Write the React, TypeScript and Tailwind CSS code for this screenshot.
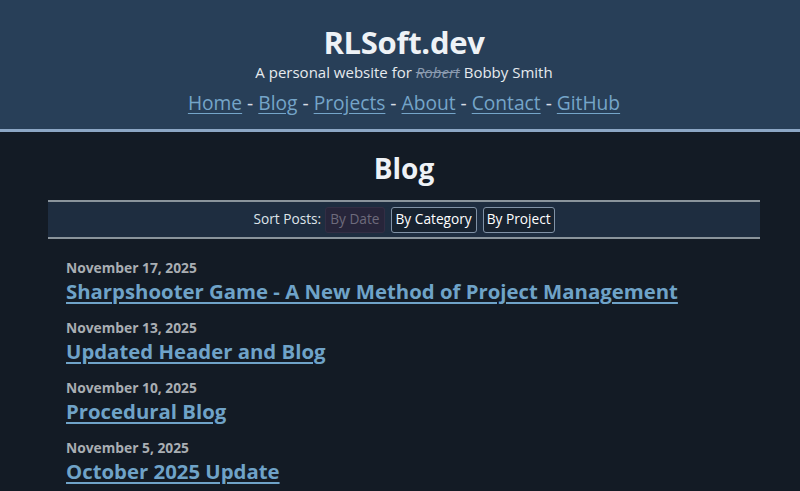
import React from 'react';

const posts = [
  { date: 'November 17, 2025', title: 'Sharpshooter Game - A New Method of Project Management' },
  { date: 'November 13, 2025', title: 'Updated Header and Blog' },
  { date: 'November 10, 2025', title: 'Procedural Blog' },
  { date: 'November 5, 2025', title: 'October 2025 Update' },
];

const navLinks = ['Home', 'Blog', 'Projects', 'About', 'Contact', 'GitHub'];

export default function App() {
  return (
    <div
      className="min-h-[491px] h-[491px] overflow-hidden bg-[#131b25] text-white"
      style={{ fontFamily: '"Open Sans", "Noto Sans", sans-serif' }}
    >
      {/* Header */}
      <header className="bg-[#283f58] border-b-[3px] border-[#8ca7c5] pl-2 pt-[22px] pb-[13px] text-center">
        <h1 className="text-[31px] font-bold leading-[40px] text-[#eef2f6] tracking-[-0.3px]">RLSoft.dev</h1>
        <p className="text-[15px] leading-[20px] text-[#e6eaee]">
          A personal website for <span className="italic line-through text-[#8b9bb0]">Robert</span> Bobby Smith
        </p>
        <nav className="mt-[8px] text-[19.2px] leading-[26px] text-[#d8dde3]">
          {navLinks.map((l, i) => (
            <span key={l}>
              {i > 0 && <span> - </span>}
              <a href="#" className="underline underline-offset-[3px] text-[#75a5c9]">
                {l}
              </a>
            </span>
          ))}
        </nav>
      </header>

      {/* Main */}
      <main className="pl-2">
        <h2 className="text-center text-[28px] font-bold leading-[40px] mt-[16px] mb-[12px] text-[#eef2f6]">Blog</h2>

        <div className="ml-10 mr-10 bg-[#1e2d40] border-y-2 border-[#8a949c] h-[39px] flex items-center justify-center gap-[6px] text-[13.7px]">
          <span className="text-[#dfe4ea] mr-[-2px]">Sort Posts:</span>
          <button className="px-[4px] h-[26px] rounded-[3px] border border-[#332e44] bg-[#27253a] text-[#6e6b7c]">
            By Date
          </button>
          <button className="px-[4px] h-[26px] rounded-[3px] border border-[#8192a6] bg-[#17222f] text-white">
            By Category
          </button>
          <button className="px-[3px] h-[26px] rounded-[3px] border border-[#8192a6] bg-[#17222f] text-white">
            By Project
          </button>
        </div>

        <ul className="ml-[58px] mt-[20px] flex flex-col gap-[13px]">
          {posts.map((p) => (
            <li key={p.title} className="flex flex-col items-start">
              <div className="text-[13.8px] font-bold leading-[17px] text-[#a9aeb3]">{p.date}</div>
              <a
                href="#"
                className="text-[20.35px] font-bold leading-[30px] text-[#6fa3c8] underline underline-offset-[3px] decoration-[1.5px]"
              >
                {p.title}
              </a>
            </li>
          ))}
        </ul>
      </main>
    </div>
  );
}
